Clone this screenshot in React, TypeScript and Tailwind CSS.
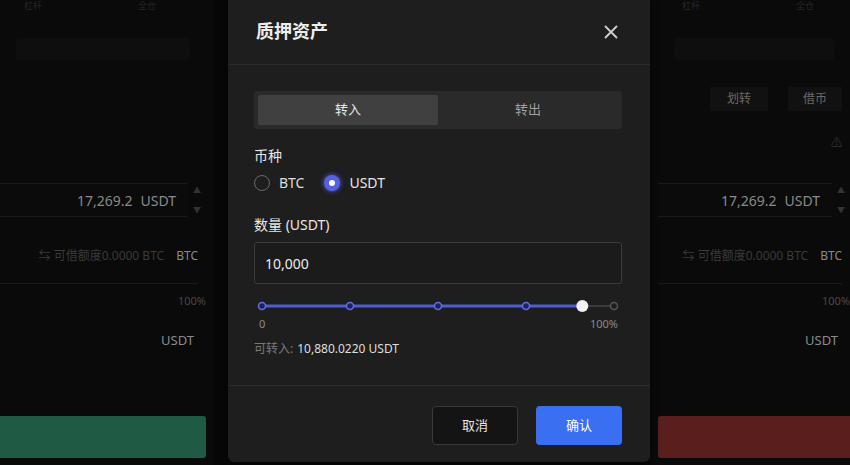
import React from "react";

const font = { fontFamily: '"Noto Sans", "Noto Sans CJK SC", sans-serif' };

function SideInput() {
  return (
    <div className="flex items-center">
      <div className="flex h-[34px] flex-1 items-center justify-end gap-2 border-y border-[#191919] bg-[#0b0b0b] pr-3 text-[14px] text-[#8a8a8a]">
        <span>17,269.2</span>
        <span>USDT</span>
      </div>
      <div className="flex w-[18px] flex-col items-center gap-2 text-[8px] text-[#333]">
        <span>▲</span>
        <span>▼</span>
      </div>
    </div>
  );
}

function Side({ side }: { side: "left" | "right" }) {
  const isLeft = side === "left";
  return (
    <div className={`flex h-full flex-col ${isLeft ? "w-[213px] pr-[7px]" : "w-[200px] pl-[8px]"} bg-[#0a0a0a]`}>
      <div className="flex h-[12px] items-start gap-24 px-6 pt-[1px] text-[9px] leading-[10px] text-[#262626]">
        <span>杠杆</span>
        <span>全仓</span>
      </div>
      <div className="mx-4 mt-[26px] h-[22px] rounded-sm bg-[#0e0e0e]" />
      <div className="mt-[27px] flex h-[24px] justify-end gap-5 pr-2">
        {isLeft ? null : (
          <>
            <div className="flex w-[58px] items-center justify-center bg-[#111] text-[12px] text-[#6a6a6a]">划转</div>
            <div className="flex w-[54px] items-center justify-center bg-[#111] text-[12px] text-[#6a6a6a]">借币</div>
          </>
        )}
      </div>
      <div className="mt-[24px] flex h-[14px] justify-end pr-2 text-[11px] text-[#333]">{isLeft ? "" : "⚠"}</div>
      <div className="mt-[34px]">
        <SideInput />
      </div>
      <div className="mt-[30px] flex items-center justify-end gap-3 pr-2 text-[12px]">
        <span className="text-[#3a3a3a]">⇆ 可借额度0.0000 BTC</span>
        <span className="text-[#8a8a8a]">BTC</span>
      </div>
      <div className="mt-[18px] mr-2 h-px bg-[#1b1b1b]" />
      <div className="mt-[9px] flex justify-end text-[11px] text-[#484848]">100%</div>
      <div className="mt-[21px] flex justify-end pr-3 text-[13px] text-[#8a8a8a]">USDT</div>
      <div className="flex-1" />
      <div className={`mb-[7px] h-[42px] ${isLeft ? "rounded-r-[3px] bg-[#1f5a45]" : "rounded-l-[3px] bg-[#5a1f1d]"}`} />
    </div>
  );
}

function Slider() {
  const stops = [0, 25, 50, 75, 100];
  const x0 = 8;
  const w = 352;
  const val = 91;
  const xs = (p: number) => x0 + (w * p) / 100;
  return (
    <svg width="368" height="16" viewBox="0 0 368 16" className="block">
      <line x1={x0} y1="8" x2={xs(100)} y2="8" stroke="#3a3a3a" strokeWidth="2" />
      <line x1={x0} y1="8" x2={xs(val)} y2="8" stroke="#4f5bd0" strokeWidth="3" />
      {stops.map((p) => (
        <circle
          key={p}
          cx={xs(p)}
          cy="8"
          r="3.5"
          fill={p <= val ? "#1a2160" : "#1e1e1e"}
          stroke={p <= val ? "#6470e0" : "#555"}
          strokeWidth="1.5"
        />
      ))}
      <circle cx={xs(val)} cy="8" r="6" fill="#f2f2f2" />
    </svg>
  );
}

export default function App() {
  return (
    <div className="relative h-[465px] w-[850px] overflow-hidden bg-[#070707]" style={font}>
      <div className="flex h-full justify-between">
        <Side side="left" />
        <Side side="right" />
      </div>

      <div className="absolute left-[228px] top-[-4px] flex h-[466px] w-[422px] flex-col rounded-b-[6px] bg-[#1e1e1e] text-[#e6e6e6] shadow-[0_0_8px_rgba(0,0,0,0.6)]">
        <div className="flex h-[69px] items-center justify-between border-b border-[#2c2c2c] pl-[28px] pr-[32px] pt-[3px]">
          <span className="text-[18px] font-bold text-[#ededed]">质押资产</span>
          <svg width="14" height="14" viewBox="0 0 14 14">
            <path d="M1.5 1.5 L12.5 12.5 M12.5 1.5 L1.5 12.5" stroke="#d0d0d0" strokeWidth="1.8" strokeLinecap="round" />
          </svg>
        </div>

        <div className="flex flex-col pl-[26px] pr-[28px]">
          <div className="mt-[26px] flex h-[38px] rounded-[3px] bg-[#2a2a2a] p-[4px]">
            <div className="flex flex-1 items-center justify-center rounded-[2px] bg-[#404040] text-[13px] text-[#e8e8e8]">转入</div>
            <div className="flex flex-1 items-center justify-center text-[13px] text-[#a0a0a0]">转出</div>
          </div>

          <div className="mt-[17px] text-[14px] leading-[20px] text-[#e6e6e6]">币种</div>
          <div className="mt-[7px] flex items-center gap-[20px] text-[14px] leading-[20px]">
            <label className="flex items-center gap-[9px]">
              <span className="h-[16px] w-[16px] rounded-full border border-[#6a6a6a]" />
              <span className="text-[#dcdcdc]">BTC</span>
            </label>
            <label className="flex items-center gap-[9px]">
              <span className="flex h-[16px] w-[16px] items-center justify-center rounded-full bg-[#5561e0] shadow-[0_0_5px_#5561e0]">
                <span className="h-[6px] w-[6px] rounded-full bg-white" />
              </span>
              <span className="text-[#e6e6e6]">USDT</span>
            </label>
          </div>

          <div className="mt-[22px] text-[14px] leading-[20px] text-[#e6e6e6]">数量 (USDT)</div>
          <div className="mt-[7px] flex h-[42px] items-center rounded-[3px] border border-[#3c3c3c] bg-[#1b1b1b] px-[10px] text-[14px] text-[#ececec]">
            10,000
          </div>

          <div className="mt-[14px]">
            <Slider />
          </div>
          <div className="mt-[3px] flex justify-between pl-[5px] pr-[4px] text-[11px] leading-[14px] text-[#8a8a8a]">
            <span>0</span>
            <span>100%</span>
          </div>
          <div className="mt-[10px] flex items-center text-[12px] leading-[16px]">
            <span className="text-[#7a7a7a]">可转入:</span>
            <span className="ml-[4px] text-[#dedede]">10,880.0220 USDT</span>
          </div>
        </div>

        <div className="mt-[28px] h-px bg-[#2c2c2c]" />
        <div className="flex justify-end gap-[18px] px-[28px] pt-[20px]">
          <div className="flex h-[39px] w-[86px] items-center justify-center rounded-[4px] border border-[#3a3a3a] bg-[#141414] text-[13px] text-[#e6e6e6]">取消</div>
          <div className="flex h-[39px] w-[86px] items-center justify-center rounded-[4px] bg-[#3b6ff2] text-[13px] text-white">确认</div>
        </div>
      </div>
    </div>
  );
}
